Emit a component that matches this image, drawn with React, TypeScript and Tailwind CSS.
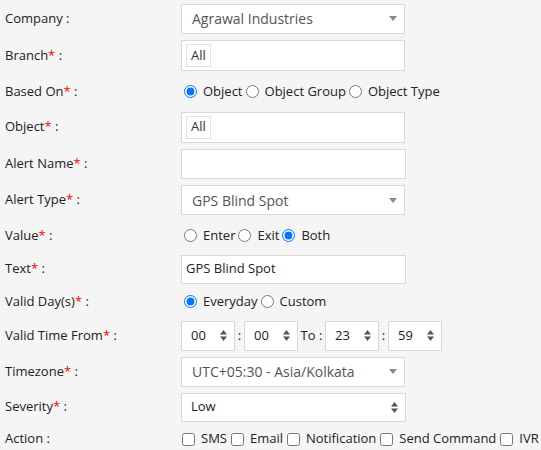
import React from 'react';

const Req = () => <span className="text-[#ff0000]">*</span>;

const Caret = () => (
  <svg width="8" height="5" viewBox="0 0 8 5" className="shrink-0">
    <path d="M0 0 L8 0 L4 5 Z" fill="#8a8a8a" />
  </svg>
);

const Spinner = () => (
  <svg width="7" height="11" viewBox="0 0 7 11" className="shrink-0">
    <path d="M0 4.5 L3.5 0 L7 4.5 Z" fill="#555" />
    <path d="M0 6.5 L7 6.5 L3.5 11 Z" fill="#555" />
  </svg>
);

function Row({ label, required, h, children }: { label: string; required?: boolean; h: string; children: React.ReactNode }) {
  return (
    <div className={`flex items-center pl-[5px] ${h}`}>
      <div className="w-[176px] shrink-0 text-[13px] text-[#222]">
        {label}
        {required && <Req />} :
      </div>
      <div className="flex items-center">{children}</div>
    </div>
  );
}

function SelectBox({ value }: { value: string }) {
  return (
    <div className="w-[224px] h-[30px] bg-white border border-[#d9d9d9] flex items-center justify-between pl-[10px] pr-[7px] text-[14px] text-[#555]">
      <span>{value}</span>
      <Caret />
    </div>
  );
}

function TagBox() {
  return (
    <div className="w-[224px] h-[31px] bg-white border border-[#d9d9d9] flex items-center pl-[4px]">
      <span className="h-[23px] px-[4px] border border-[#e2e2e2] flex items-center text-[13px] text-[#333]">All</span>
    </div>
  );
}

function Radio({ label, checked }: { label: string; checked?: boolean }) {
  return (
    <label className="flex items-center text-[13px] text-[#222]">
      <input type="radio" defaultChecked={checked} className="w-[13px] h-[13px] ml-[3px] mr-[6px] accent-[#0075ff]" />
      {label}
    </label>
  );
}

function Check({ label }: { label: string }) {
  return (
    <label className="flex items-center text-[13px] text-[#222] mr-[3px]">
      <input type="checkbox" className="w-[13px] h-[13px] ml-[1px] mr-[6px]" />
      {label}
    </label>
  );
}

function TimeBox({ value }: { value: string }) {
  return (
    <div className="w-[54px] h-[30px] bg-white border border-[#d9d9d9] flex items-center justify-between pl-[9px] pr-[7px] text-[13px] text-[#222]">
      <span>{value}</span>
      <Spinner />
    </div>
  );
}

export default function App() {
  return (
    <div className="w-[541px] h-[450px] bg-[#f5f5f5] overflow-hidden" style={{ fontFamily: '"Open Sans", sans-serif' }}>
      <Row label="Company" h="h-[37px]">
        <SelectBox value="Agrawal Industries" />
      </Row>
      <Row label="Branch" required h="h-[37px]">
        <TagBox />
      </Row>
      <Row label="Based On" required h="h-[35px]">
        <Radio label="Object" checked />
        <Radio label="Object Group" />
        <Radio label="Object Type" />
      </Row>
      <Row label="Object" required h="h-[36px]">
        <TagBox />
      </Row>
      <Row label="Alert Name" required h="h-[37px]">
        <div className="w-[225px] h-[30px] bg-white border border-[#d9d9d9]" />
      </Row>
      <Row label="Alert Type" required h="h-[36px]">
        <SelectBox value="GPS Blind Spot" />
      </Row>
      <Row label="Value" required h="h-[35px]">
        <Radio label="Enter" />
        <Radio label="Exit" />
        <Radio label="Both" checked />
      </Row>
      <Row label="Text" required h="h-[32px]">
        <div className="w-[225px] h-[29px] bg-white border border-[#d9d9d9] flex items-center pl-[4px] text-[13px] text-[#222]">
          GPS Blind Spot
        </div>
      </Row>
      <Row label="Valid Day(s)" required h="h-[33px]">
        <Radio label="Everyday" checked />
        <Radio label="Custom" />
      </Row>
      <Row label="Valid Time From" required h="h-[35px]">
        <TimeBox value="00" />
        <span className="w-[9px] text-center text-[13px] text-[#222]">:</span>
        <TimeBox value="00" />
        <span className="w-[27px] text-center text-[13px] text-[#222]">To :</span>
        <TimeBox value="23" />
        <span className="w-[9px] text-center text-[13px] text-[#222]">:</span>
        <TimeBox value="59" />
      </Row>
      <Row label="Timezone" required h="h-[37px]">
        <SelectBox value="UTC+05:30 - Asia/Kolkata" />
      </Row>
      <Row label="Severity" required h="h-[34px]">
        <div className="w-[225px] h-[29px] bg-white border border-[#d9d9d9] flex items-center justify-between pl-[9px] pr-[7px] text-[13px] text-[#222]">
          <span>Low</span>
          <Spinner />
        </div>
      </Row>
      <Row label="Action" h="h-[30px]">
        <div className="flex items-center whitespace-nowrap">
          <Check label="SMS" />
          <Check label="Email" />
          <Check label="Notification" />
          <Check label="Send Command" />
          <Check label="IVR" />
        </div>
      </Row>
    </div>
  );
}
